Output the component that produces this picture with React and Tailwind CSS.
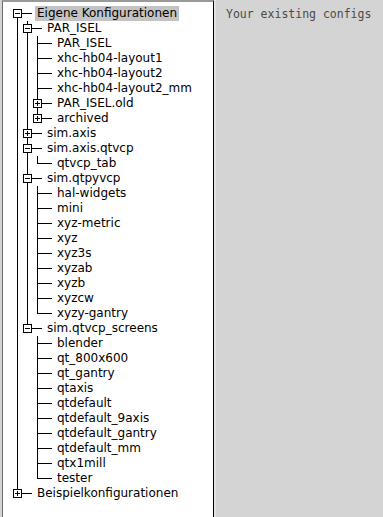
import React from "react";

const T = (label, d, opts = {}) => ({ label, d, ...opts });

const rows = [
  T("Eigene Konfigurationen", 0, { box: "minus", sel: true }),
  T("PAR_ISEL", 1, { box: "minus" }),
  T("PAR_ISEL", 2),
  T("xhc-hb04-layout1", 2),
  T("xhc-hb04-layout2", 2),
  T("xhc-hb04-layout2_mm", 2),
  T("PAR_ISEL.old", 2, { box: "plus" }),
  T("archived", 2, { box: "plus", last: true }),
  T("sim.axis", 1, { box: "plus" }),
  T("sim.axis.qtvcp", 1, { box: "minus" }),
  T("qtvcp_tab", 2, { last: true }),
  T("sim.qtpyvcp", 1, { box: "minus" }),
  T("hal-widgets", 2),
  T("mini", 2),
  T("xyz-metric", 2),
  T("xyz", 2),
  T("xyz3s", 2),
  T("xyzab", 2),
  T("xyzb", 2),
  T("xyzcw", 2),
  T("xyzy-gantry", 2, { last: true }),
  T("sim.qtvcp_screens", 1, { box: "minus", last: true }),
  T("blender", 2),
  T("qt_800x600", 2),
  T("qt_gantry", 2),
  T("qtaxis", 2),
  T("qtdefault", 2),
  T("qtdefault_9axis", 2),
  T("qtdefault_gantry", 2),
  T("qtdefault_mm", 2),
  T("qtx1mill", 2),
  T("tester", 2, { last: true }),
  T("Beispielkonfigurationen", 0, { box: "plus", last: true }),
];

// compute, for each row, which ancestor levels have continuing lines
function computeContinuations() {
  const stackLast = []; // stackLast[k] = whether current ancestor at depth k is last
  return rows.map((r, i) => {
    stackLast[r.d] = !!r.last;
    const cont = [];
    for (let k = 0; k < r.d; k++) cont.push(!stackLast[k]);
    return { ...r, cont, first: i === 0 };
  });
}

const data = computeContinuations();

function Connector({ row }) {
  const cx = 14 + 10 * row.d;
  const W = cx + 15;
  const cy = 7;
  const lines = [];
  row.cont.forEach((c, k) => {
    if (c) {
      const x = 14 + 10 * k + 0.5;
      lines.push(<line key={"a" + k} x1={x} y1={0} x2={x} y2={15} />);
    }
  });
  const x = cx + 0.5;
  const top = row.first ? cy : 0;
  const bottom = row.last ? cy + 0.5 : 15;
  lines.push(<line key="v" x1={x} y1={top} x2={x} y2={bottom} />);
  lines.push(<line key="h" x1={cx} y1={cy + 0.5} x2={cx + 15} y2={cy + 0.5} />);
  return (
    <svg width={W} height={15} className="shrink-0 block" shapeRendering="crispEdges">
      <g stroke="#000" strokeWidth="1">
        {lines}
        {row.box && (
          <g>
            <rect x={cx - 3.5} y={3.5} width={8} height={8} fill="#fff" />
            <line x1={cx - 2} y1={cy + 0.5} x2={cx + 3} y2={cy + 0.5} />
            {row.box === "plus" && (
              <line x1={cx + 0.5} y1={cy - 2} x2={cx + 0.5} y2={cy + 3} />
            )}
          </g>
        )}
      </g>
    </svg>
  );
}

export default function App() {
  return (
    <div className="flex h-[517px] w-[383px] overflow-hidden bg-[#d4d4d4]">
      <div className="ml-[2px] flex h-full">
        <div className="h-full w-[212px] border-t-2 border-l border-r border-t-[#9a9a9a] border-l-[#6a6a6a] border-r-black bg-white pt-[4px]">
          {data.map((r, i) => (
            <div key={i} className="flex h-[15px] items-center">
              <Connector row={r} />
              <span
                className={
                  "ml-[3px] px-[2px] whitespace-nowrap text-[12px] leading-[15px] text-black " +
                  (r.sel ? "bg-[#c3c3c3]" : "")
                }
                style={{ fontFamily: '"DejaVu Sans", sans-serif' }}
              >
                {r.label}
              </span>
            </div>
          ))}
        </div>
        <div className="h-full w-[2px] bg-[#e2e2e2]" />
      </div>
      <div className="flex-1 pl-[10px] pt-[7px]">
        <div
          className="whitespace-nowrap text-[11.5px] leading-[15px] text-[#4a4a4a]"
          style={{ fontFamily: '"DejaVu Sans Mono", monospace' }}
        >
          Your existing configs
        </div>
      </div>
    </div>
  );
}
